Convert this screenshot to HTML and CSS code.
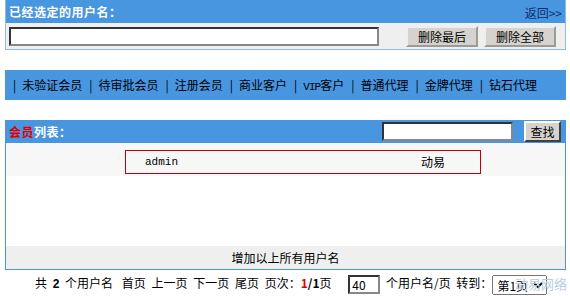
FILE: index.html
```html
<!DOCTYPE html>
<html lang="zh-CN">
<head>
    <meta charset="UTF-8">
    <title>选择用户名</title>
    <link rel="stylesheet" href="styles.css">
</head>
<body>
    <div class="page">
        <div class="panel">
            <div class="panel-title">
                <span class="title">已经选定的用户名：</span>
                <a class="back" href="#">返回&gt;&gt;</a>
            </div>
            <div class="selected-row">
                <input class="selected" type="text">
                <button class="btn">删除最后</button>
                <button class="btn">删除全部</button>
            </div>
        </div>

        <div class="groups">
            <i>|</i>未验证会员<i>|</i>待审批会员<i>|</i>注册会员<i>|</i>商业客户<i>|</i><span class="latin">VIP</span>客户<i>|</i>普通代理<i>|</i>金牌代理<i>|</i>钻石代理
        </div>

        <div class="panel list">
            <div class="panel-title">
                <span class="title"><em>会员</em>列表：</span>
                <span class="search">
                    <input class="keyword" type="text">
                    <button class="btn small">查找</button>
                </span>
            </div>
            <div class="users">
                <div class="user-box">
                    <span class="name">admin</span>
                    <span class="nick">动易</span>
                </div>
            </div>
            <div class="blank"></div>
            <div class="add-all">增加以上所有用户名</div>
        </div>

        <div class="pager">
            <span>共 <b>2</b> 个用户名</span>
            <span class="gap">首页</span>
            <span class="sp">上一页</span>
            <span class="sp">下一页</span>
            <span class="sp">尾页</span>
            <span class="sp">页次：<strong class="cur">1</strong><strong>/1</strong>页</span>
            <input class="per" type="text" value="40">
            <span class="sp">个用户名/页</span>
            <span class="sp">转到：</span><select class="goto"><option>第1页</option></select>
            <span class="mark">动易网络</span>
        </div>
    </div>
</body>
</html>
```

FILE: styles.css
```css
body {
    margin: 0;
    font-family: "Noto Sans CJK SC", "DejaVu Sans", sans-serif;
    font-size: 12px;
    color: #000;
    background: #fff;
}

.page {
    width: 561px;
    padding-left: 5px;
}

.panel {
    border: 1px solid #8ebbe8;
    border-top: none;
}

.panel-title {
    height: 23px;
    background: #4895e0;
    display: flex;
    align-items: center;
    justify-content: space-between;
    padding: 0 3px 0 3px;
}

.title {
    color: #fff;
    font-weight: bold;
    font-size: 12px;
    letter-spacing: 0.5px;
}

.title em {
    font-style: normal;
    color: #e00000;
}

.back {
    color: #0d2f6e;
    text-decoration: none;
    font-size: 12px;
    margin-top: 2px;
}

.selected-row {
    background: #efefef;
    height: 26px;
    display: flex;
    align-items: center;
    padding: 0 3px;
}

.selected {
    width: 366px;
    height: 15px;
    margin: 0 27px 0 0;
    border: 2px inset #888;
    padding: 0;
}

.btn {
    font-family: inherit;
    font-size: 12px;
    background: #d6d3ce;
    border: 2px outset #eee;
    padding: 0;
    height: 21px;
    width: 72px;
    margin-right: 6px;
}

.btn.small {
    width: 37px;
    height: 21px;
    margin: 0;
    border-color: #fff #404040 #404040 #fff;
    border-style: solid;
}

.groups {
    margin-top: 20px;
    height: 30px;
    line-height: 30px;
    background: #4895e0;
    padding-left: 8px;
    white-space: nowrap;
    font-size: 12px;
}

.groups i {
    font-style: normal;
    display: inline-block;
    margin: 0 6px 0 7px;
}

.groups i:first-child {
    margin-left: 0;
}

.latin {
    font-family: "Liberation Mono", monospace;
    font-size: 11px;
    letter-spacing: -1px;
}

.list {
    margin-top: 20px;
    border-color: #4895e0;
}

.list .panel-title {
    padding-right: 4px;
}

.search {
    display: flex;
    align-items: center;
}

.keyword {
    width: 127px;
    height: 15px;
    border: 2px inset #888;
    padding: 0;
    margin-right: 11px;
}

.users {
    background: #f7f7f7;
    height: 33px;
    display: flex;
    align-items: center;
    padding-left: 119px;
}

.user-box {
    width: 354px;
    height: 22px;
    border: 1px solid #c00000;
    display: flex;
    align-items: center;
    margin-top: 4px;
}

.name {
    font-family: "Liberation Mono", monospace;
    font-size: 11px;
    margin-left: 19px;
    width: 276px;
}

.blank {
    height: 70px;
    background: #fff;
}

.add-all {
    height: 23px;
    line-height: 23px;
    background: #efefef;
    text-align: center;
}

.pager {
    position: relative;
    height: 24px;
    line-height: 24px;
    padding-left: 30px;
    white-space: nowrap;
    font-size: 12px;
    margin-top: 1px;
}

.pager b {
    font-family: "Liberation Sans", sans-serif;
    margin: 0 3px;
}

.gap {
    margin-left: 6px;
}

.sp {
    margin-left: 3px;
}

.cur {
    color: #e00000;
}

.per {
    width: 26px;
    height: 15px;
    border: 2px inset #888;
    padding: 0 0 0 2px;
    margin: 0 0 0 14px;
    font-size: 12px;
    font-family: inherit;
    vertical-align: middle;
}

.goto {
    width: 55px;
    height: 20px;
    font-family: inherit;
    font-size: 12px;
    padding: 0;
    vertical-align: middle;
}

.mark {
    position: absolute;
    left: 510px;
    top: 1px;
    color: #b9cde2;
    font-size: 13px;
}
```
